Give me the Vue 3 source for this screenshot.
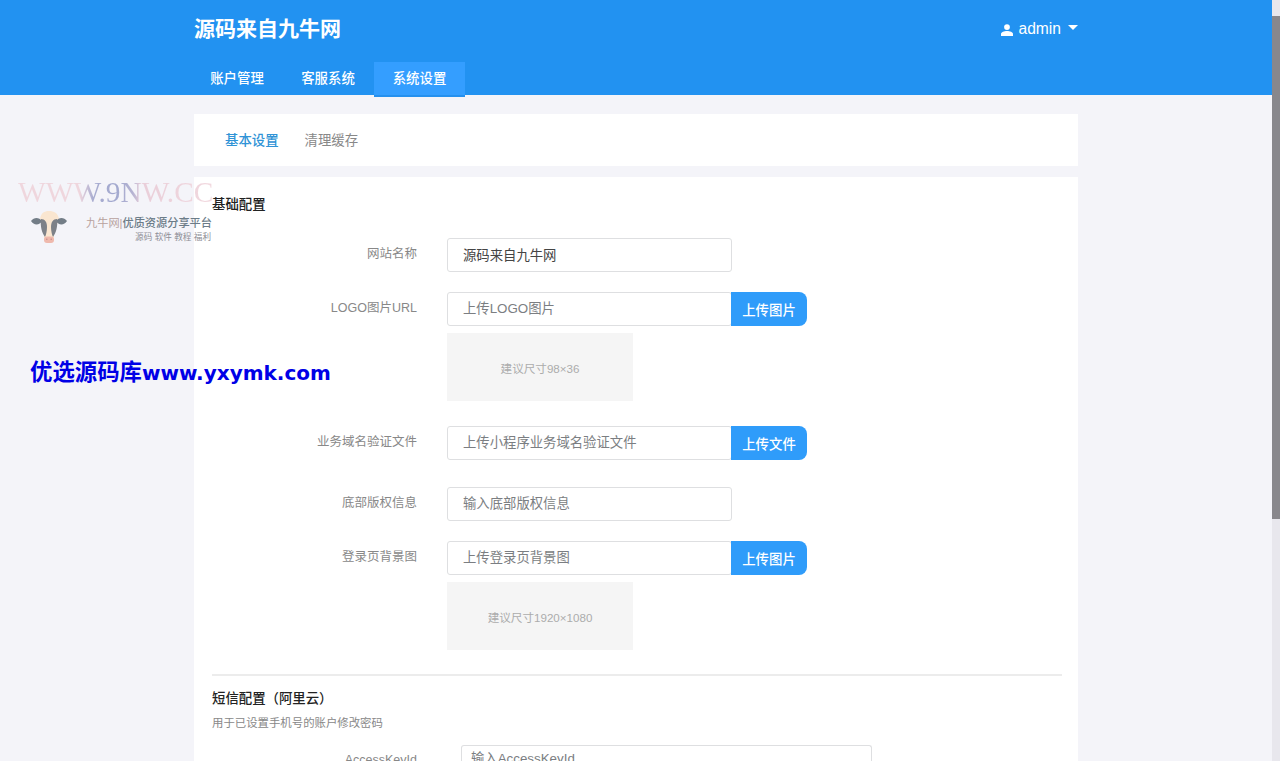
<template>
  <div class="page">
    <div class="main">
      <header class="header">
        <div class="container">
          <div class="topbar">
            <h1 class="brand">源码来自九牛网</h1>
            <div class="user">
              <svg class="user-icon" viewBox="0 0 12 12">
                <circle cx="6" cy="3.1" r="2.9" />
                <path d="M0 12V10.2C0 8 3.2 7.1 6 7.1s6 .9 6 3.1V12z" />
              </svg>
              <span>admin</span>
              <i class="caret"></i>
            </div>
          </div>
          <nav class="nav">
            <a
              v-for="item in navs"
              :key="item"
              class="nav-item"
              :class="{ active: item === activeNav }"
              @click="activeNav = item"
            >{{ item }}</a>
          </nav>
        </div>
      </header>

      <div class="container">
        <div class="tabs">
          <a
            v-for="tab in tabs"
            :key="tab"
            class="tab"
            :class="{ active: tab === activeTab }"
            @click="activeTab = tab"
          >{{ tab }}</a>
        </div>

        <div class="panel">
          <h2 class="section-title">基础配置</h2>

          <div v-for="row in rows" :key="row.key" class="form-row" :class="row.key">
            <label class="label">{{ row.label }}</label>
            <div class="field">
              <div class="input-group">
                <input v-model="form[row.key]" class="input" :placeholder="row.placeholder" />
                <button v-if="row.button" class="upload-btn">{{ row.button }}</button>
              </div>
              <div v-if="row.hint" class="preview">{{ row.hint }}</div>
            </div>
          </div>

          <div class="divider"></div>

          <h2 class="section-title sms-title">短信配置（阿里云）</h2>
          <p class="desc">用于已设置手机号的账户修改密码</p>
          <div class="form-row sms-row">
            <label class="label">AccessKeyId</label>
            <input v-model="form.accessKeyId" class="input wide" placeholder="输入AccessKeyId" />
          </div>
        </div>
      </div>
    </div>

    <div class="scrollbar"><div class="thumb"></div></div>

    <div class="mark">
      <div class="mark-url">WWW.9NW.CC</div>
      <div class="mark-body">
        <svg class="cow" viewBox="0 0 38 34">
          <path d="M10 9C11 3 14 1 19 1s9 2 10 8l-5 14v6H14v-6z" fill="#fae6d0" />
          <path d="M1 11c3-4 8-4 11 0-2 4-8 5-11 0zM37 11c-3-4-8-4-11 0 2 4 8 5 11 0z" fill="#737d87" />
          <path d="M11 9c4 0 6 3 6 8 0 4-1 8-2 10-3-4-5-11-4-18zM27 9c-4 0-6 3-6 8 0 4 1 8 2 10 3-4 5-11 4-18z" fill="#7d8188" />
          <rect x="14" y="26.500" width="10" height="6.500" rx="3" fill="#efb9ad" />
          <circle cx="16.800" cy="29.300" r=".8" fill="#c98e88" />
          <circle cx="21.200" cy="29.300" r=".8" fill="#c98e88" />
        </svg>
        <div class="mark-text">
          <div class="mark-name"><span class="mark-site">九牛网|</span>优质资源分享平台</div>
          <div class="mark-sub">源码 软件 教程 福利</div>
        </div>
      </div>
    </div>
    <div class="site-mark"><span class="site-cn">优选源码库</span><span>www.yxymk.com</span></div>
  </div>
</template>

<script setup>
import { ref, reactive } from 'vue'

const navs = ['账户管理', '客服系统', '系统设置']
const tabs = ['基本设置', '清理缓存']
const activeNav = ref('系统设置')
const activeTab = ref('基本设置')

const form = reactive({
  name: '源码来自九牛网',
  logo: '',
  verify: '',
  copyright: '',
  background: '',
  accessKeyId: ''
})

const rows = [
  { key: 'name', label: '网站名称', placeholder: '输入网站名称' },
  { key: 'logo', label: 'LOGO图片URL', placeholder: '上传LOGO图片', button: '上传图片', hint: '建议尺寸98×36' },
  { key: 'verify', label: '业务域名验证文件', placeholder: '上传小程序业务域名验证文件', button: '上传文件' },
  { key: 'copyright', label: '底部版权信息', placeholder: '输入底部版权信息' },
  { key: 'background', label: '登录页背景图', placeholder: '上传登录页背景图', button: '上传图片', hint: '建议尺寸1920×1080' }
]
</script>

<style>
body { background: #f4f4f9; overflow: hidden; }
</style>

<style scoped>
*, *::before, *::after { box-sizing: border-box; margin: 0; padding: 0; }

.page {
  position: relative;
  display: flex;
  height: 100vh;
  overflow: hidden;
  background: #f4f4f9;
  font-family: 'Liberation Sans', 'Noto Sans CJK SC', sans-serif;
  font-size: 13.4px;
  color: #333;
}

.main { flex: 1; height: 100%; overflow: hidden; }

.container { width: 884px; margin: 0 auto; }

.header { height: 95px; background: #2292f1; }

.topbar {
  display: flex;
  align-items: center;
  justify-content: space-between;
  height: 62px;
  padding-bottom: 4px;
}

.brand { font-size: 21px; line-height: 30px; font-weight: 700; color: #fff; }

.user {
  display: flex;
  align-items: center;
  font-size: 15.6px;
  color: #fff;
}
.user-icon { width: 12px; height: 12px; margin: 1px 6px 0 0; fill: #fff; }
.caret {
  margin: -3px 0 0 7px;
  border: 5px solid transparent;
  border-top-color: #fff;
  border-bottom: 0;
}

.nav { display: flex; height: 35px; }
.nav-item {
  width: 91px;
  line-height: 33px;
  text-align: center;
  font-weight: 500;
  color: #fff;
  cursor: pointer;
}
.nav-item:first-child { width: 86px; }
.nav-item:nth-child(2) { width: 94px; padding-left: 2px; }
.nav-item.active { background: #349eff; border-bottom: 2px solid #2590ee; }

.tabs {
  display: flex;
  gap: 26px;
  height: 52px;
  margin-top: 19px;
  padding: 0 31px;
  line-height: 54px;
  background: #fff;
}
.tab { color: #888; cursor: pointer; }
.tab.active { color: #3093d6; font-weight: 500; }

.panel {
  height: 700px;
  margin-top: 11px;
  padding: 18px 16px 0 18px;
  background: #fff;
}

.section-title { font-size: 13.4px; line-height: 20px; font-weight: 500; color: #222; }

.form-row { display: flex; align-items: flex-start; margin-bottom: 20px; }
.form-row.name { margin-top: 23px; }
.form-row.logo { margin-bottom: 25px; }
.form-row.verify { margin-bottom: 27px; }
.form-row.background { margin-bottom: 24px; }

.label {
  width: 205px;
  margin-right: 30px;
  text-align: right;
  font-size: 12.5px;
  line-height: 33px;
  color: #888;
}

.input-group { display: flex; }

.input {
  width: 285px;
  height: 34px;
  padding: 0 15px 1px;
  border: 1px solid #dedfe1;
  border-radius: 3px;
  background: #fff;
  outline: none;
  font-family: inherit;
  font-size: 13.35px;
  color: #444;
}
.input::placeholder { color: #7b7e82; opacity: 1; }
.input:focus { border-color: #349eff; }

.upload-btn {
  width: 76px;
  height: 34px;
  margin-left: -1px;
  border: none;
  border-radius: 0 8px 8px 0;
  background: #2f9cfa;
  font-family: inherit;
  font-size: 13.4px;
  font-weight: 500;
  color: #fff;
  cursor: pointer;
}

.preview {
  width: 186px;
  height: 68px;
  margin-top: 7px;
  padding-top: 4px;
  line-height: 64px;
  text-align: center;
  font-size: 11.6px;
  color: #acacac;
  background: #f5f5f5;
}

.divider { height: 2px; background: #ececec; }

.sms-title { margin-top: 13px; }
.desc { margin-top: 4px; font-size: 11.4px; line-height: 20px; color: #888; }

.sms-row { margin-top: 12px; }
.sms-row .label { margin-right: 44px; line-height: 30px; }
.input.wide { width: 411px; height: 25px; padding: 0 9px; border-bottom: none; }

.scrollbar { width: 8px; padding-top: 16px; background: #e8e7ed; }
.thumb { height: 503px; background: #88878c; }

/* watermarks laid over the page */
.mark { position: absolute; left: 18px; top: 176px; width: 198px; pointer-events: none; }
.mark-url {
  font-family: 'Liberation Serif', serif;
  font-size: 29.4px;
  line-height: 33px;
  white-space: nowrap;
  color: transparent;
  background: linear-gradient(90deg, #efd6dd 0 31%, #a8acd0 38%, #a3a9cf 50%, #b5b3d2 58%, #e9ced9 62%, #f2d9df 100%);
  background-clip: text;
}
.mark-body { display: flex; justify-content: space-between; padding: 1px 4px 0 12px; }
.cow { width: 38px; height: 34px; }
.mark-text { padding-top: 5px; text-align: right; white-space: nowrap; }
.mark-name { font-size: 11.2px; line-height: 16px; font-weight: 500; color: #6c7c88; }
.mark-site { font-weight: 400; color: #b8a29e; }
.mark-sub { padding-right: 1px; font-size: 8.6px; line-height: 12px; color: #8e8e96; }

.site-mark {
  position: absolute;
  left: 30px;
  top: 355px;
  display: flex;
  align-items: baseline;
  line-height: 30px;
  font-family: 'DejaVu Sans', sans-serif;
  font-size: 20px;
  font-weight: 700;
  color: #0000e6;
  white-space: nowrap;
  pointer-events: none;
}
.site-cn { font-family: 'Noto Sans CJK SC', sans-serif; font-size: 22.4px; }
</style>
